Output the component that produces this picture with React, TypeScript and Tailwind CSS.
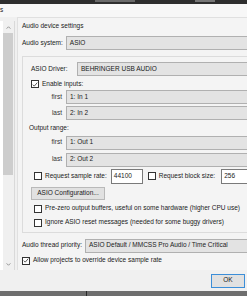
import React from "react";

function Check({ checked = false }: { checked?: boolean }) {
  return (
    <span className="flex size-[8px] shrink-0 items-center justify-center border border-[#333] bg-white">
      {checked && (
        <svg viewBox="0 0 8 8" className="size-[7px]">
          <path d="M1 4.2 L3 6.2 L7 1.5" fill="none" stroke="#222" strokeWidth="1" />
        </svg>
      )}
    </span>
  );
}

function Combo({ text, className = "" }: { text: string; className?: string }) {
  return (
    <div
      className={`flex h-[14px] flex-1 items-center border-y border-l border-[#b0b0b0] bg-[#e3e3e3] pl-[3px] ${className}`}
    >
      {text}
    </div>
  );
}

function RangeRow({ label, value }: { label: string; value: string }) {
  return (
    <div className="flex items-center">
      <span className="w-[35px] pr-[4px] text-right text-[#333]">{label}</span>
      <Combo text={value} />
    </div>
  );
}

export default function App() {
  return (
    <div
      className="flex h-[296px] w-[247px] flex-col overflow-hidden bg-[#f0f0f0] text-[6.5px] leading-none text-[#1a1a1a]"
      style={{ fontFamily: '"Liberation Sans", Arial, sans-serif' }}
    >
      {/* window behind */}
      <div className="flex h-[4px] shrink-0 bg-[#2e2e2e]">
        <div className="ml-[95px] h-[2px] w-[40px] bg-[#6a6a6a]" />
        <div className="ml-[60px] h-[2px] w-[20px] bg-[#777]" />
      </div>
      <div className="flex h-[13px] shrink-0 items-center bg-[#f7f7f7]">
        <span className="text-[#222]">s</span>
      </div>

      <div className="flex flex-1 bg-[#f0f0f0]">
        {/* category list scrollbar */}
        <div className="mt-[4px] flex h-[249px] w-[15px] border-r border-[#d9d9d9] bg-white pl-[3px]">
          <div className="flex flex-1 flex-col bg-[#f0f0f0]">
            <div className="flex h-[12px] items-center justify-center">
              <svg viewBox="0 0 6 4" className="h-[3px] w-[5px]">
                <path d="M0.5 3.5 L3 1 L5.5 3.5" fill="none" stroke="#777" strokeWidth="1" />
              </svg>
            </div>
            <div className="mr-[1px] h-[142px] bg-[#cdcdcd]" />
            <div className="flex-1" />
            <div className="flex h-[12px] items-center justify-center">
              <svg viewBox="0 0 6 4" className="h-[3px] w-[5px]">
                <path d="M0.5 0.5 L3 3 L5.5 0.5" fill="none" stroke="#777" strokeWidth="1" />
              </svg>
            </div>
          </div>
        </div>

        {/* settings panel */}
        <div className="ml-[2px] flex h-[253px] flex-1 flex-col border-l border-t border-[#e0e0e0] bg-[#f4f4f4] pl-[4px] pt-[5px]">
          <div className="h-[8px]">Audio device settings</div>
          <div className="mt-[5px] flex items-center">
            <span className="pr-[3px]">Audio system:</span>
            <Combo text="ASIO" />
          </div>

          <div className="mt-[6px] flex flex-col border-y border-l border-[#dcdcdc] pb-[5px] pl-[8px] pt-[5px]">
            <div className="flex items-center">
              <span className="w-[46px]">ASIO Driver:</span>
              <Combo text="BEHRINGER USB AUDIO" />
            </div>
            <div className="mt-[4px] flex items-center gap-[3px]">
              <Check checked />
              <span>Enable inputs:</span>
            </div>
            <div className="mt-[2px] flex flex-col gap-[2px]">
              <RangeRow label="first" value="1: In 1" />
              <RangeRow label="last" value="2: In 2" />
            </div>
            <div className="-ml-[2px] mt-[5px]">Output range:</div>
            <div className="mt-[4px] flex flex-col gap-[3px]">
              <RangeRow label="first" value="1: Out 1" />
              <RangeRow label="last" value="2: Out 2" />
            </div>
            <div className="mt-[2px] flex items-center">
              <span className="ml-[3px] mr-[3px]">
                <Check />
              </span>
              <span>Request sample rate:</span>
              <div className="ml-[4px] flex h-[15px] w-[32px] items-center border border-[#7a7a7a] bg-white pl-[2px]">
                44100
              </div>
              <span className="ml-[5px] mr-[3px]">
                <Check />
              </span>
              <span>Request block size:</span>
              <div className="ml-[6px] flex h-[15px] flex-1 items-center border-y border-l border-[#7a7a7a] bg-white pl-[2px]">
                256
              </div>
            </div>
            <div className="mt-[3px] flex h-[13px] w-[74px] items-center justify-center border border-[#b9b9b9] bg-[#e1e1e1]">
              ASIO Configuration...
            </div>
            <div className="ml-[3px] mt-[5px] flex items-center gap-[3px] whitespace-nowrap">
              <Check />
              <span>Pre-zero output buffers, useful on some hardware (higher CPU use)</span>
            </div>
            <div className="ml-[3px] mt-[6px] flex items-center gap-[3px] whitespace-nowrap">
              <Check />
              <span>Ignore ASIO reset messages (needed for some buggy drivers)</span>
            </div>
          </div>

          <div className="mt-[6px] flex items-center">
            <span className="pr-[3px]">Audio thread priority:</span>
            <Combo text="ASIO Default / MMCSS Pro Audio / Time Critical" />
          </div>
          <div className="mt-[4px] flex items-center gap-[3px]">
            <Check checked />
            <span>Allow projects to override device sample rate</span>
          </div>
        </div>
      </div>

      <div className="flex h-[21px] shrink-0 items-center justify-end bg-[#f0f0f0] pr-[2px]">
        <div className="flex h-[14px] w-[34px] items-center justify-center border border-[#3c8ed8] bg-[#e1e1e1]">
          OK
        </div>
      </div>
      <div className="flex h-[5px] shrink-0 bg-[#6e6e6e]">
        <div className="ml-[86px] w-[1px] bg-[#2a2a2a]" />
      </div>
    </div>
  );
}
